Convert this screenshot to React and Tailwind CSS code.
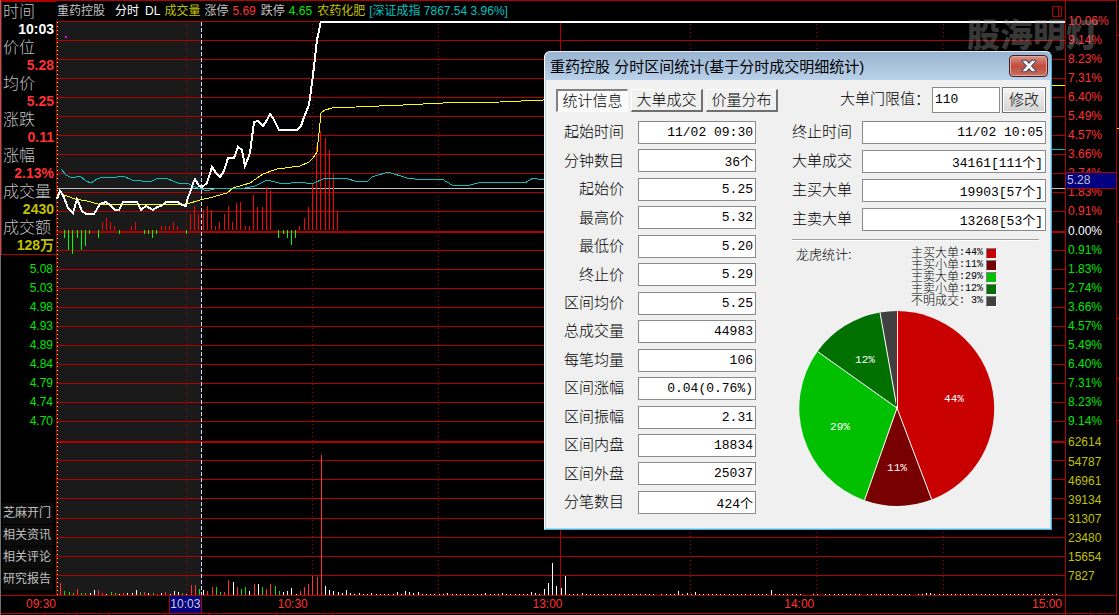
import React from "react";

const quote = [
  ["时间", "10:03", "text-white"],
  ["价位", "5.28", "text-[#ff3232]"],
  ["均价", "5.25", "text-[#ff3232]"],
  ["涨跌", "0.11", "text-[#ff3232]"],
  ["涨幅", "2.13%", "text-[#ff3232]"],
  ["成交量", "2430", "text-[#c0c000]"],
  ["成交额", "128万", "text-[#c0c000]"],
];

const lowPrices = ["5.08", "5.03", "4.98", "4.93", "4.89", "4.84", "4.79", "4.74", "4.70"];
const links = ["芝麻开门", "相关资讯", "相关评论", "研究报告"];

const upper = ["10.06%", "9.14%", "8.23%", "7.31%", "6.40%", "5.49%", "4.57%", "3.66%", "2.74%", "1.83%", "0.91%"];
const lower = ["0.91%", "1.83%", "2.74%", "3.66%", "4.57%", "5.49%", "6.40%", "7.31%", "8.23%", "9.14%"];
const volumes = ["54787", "46961", "39134", "31307", "23480", "15654", "7827"];

const gridY = [
  21, 40, 59, 78, 97, 116, 135, 154, 173, 192, 211, 250, 269, 288, 307, 326, 345, 364, 383, 402, 421,
  460, 479, 498, 518, 537, 556, 575, 595,
];
const gridX = [186, 312, 438, 690, 816, 943];

const redBars = [
  [102, 222], [106, 218], [110, 222], [114, 226], [131, 226], [135, 222], [161, 226], [165, 226], [169, 226],
  [173, 222], [177, 226], [190, 214], [194, 206], [198, 214], [203, 210], [207, 206], [211, 210], [215, 226],
  [219, 222], [224, 214], [228, 206], [232, 222], [236, 203], [240, 202], [245, 226], [249, 226], [253, 195],
  [257, 207], [262, 207], [266, 187], [270, 191], [299, 226], [304, 218], [308, 207], [312, 183], [316, 146],
  [320, 131], [325, 138], [329, 150], [333, 174], [337, 211],
];
const greenBars = [
  [64, 238], [68, 250], [72, 254], [77, 238], [81, 250], [85, 246], [89, 234], [98, 238], [119, 234], [144, 234],
  [148, 234], [152, 238], [156, 234], [186, 234], [278, 238], [283, 234], [287, 238], [291, 245], [295, 238],
];

const volR = [
  [60, 583], [77, 589], [98, 590], [102, 593], [123, 593], [144, 592], [157, 594], [165, 592], [191, 585],
  [195, 585], [207, 591], [212, 587], [224, 592], [228, 580], [237, 587], [254, 584], [266, 589], [270, 584],
  [300, 591], [304, 587], [308, 584], [312, 576], [317, 577], [321, 455],
];
const volG = [
  [64, 591], [69, 592], [73, 593], [81, 593], [85, 593], [111, 592], [115, 593], [140, 592], [153, 593],
  [182, 593], [199, 589], [216, 587], [220, 592], [241, 589], [245, 587], [262, 587], [275, 586], [279, 591],
];
const volW = [
  [90, 593], [94, 590], [106, 594], [119, 594], [127, 593], [132, 593], [136, 590], [148, 593], [161, 593],
  [170, 594], [174, 591], [178, 592], [186, 594], [203, 590], [233, 582], [249, 591], [258, 584], [283, 592],
  [287, 591], [291, 588], [296, 594], [325, 586], [329, 590], [333, 591], [338, 592], [342, 593], [346, 590],
  [350, 593], [354, 594], [359, 593], [363, 594], [367, 594], [371, 593], [376, 594], [380, 594], [384, 594],
  [388, 594], [393, 594], [397, 592], [401, 594], [405, 591], [409, 592], [413, 593], [418, 592], [422, 594],
  [426, 594], [430, 594], [434, 594], [439, 594], [443, 594], [447, 593], [452, 594], [456, 594], [460, 594],
  [464, 594], [468, 594], [473, 594], [477, 594], [481, 594], [485, 593], [490, 594], [494, 594], [498, 594],
  [502, 593], [506, 594], [510, 594], [515, 594], [519, 594], [523, 594], [527, 594], [531, 592], [535, 593],
  [539, 594], [544, 589], [548, 583], [552, 563], [556, 586], [561, 588], [565, 576], [582, 593], [678, 591],
  [687, 593], [695, 592], [771, 590], [926, 593], [930, 593],
];
const dots = [];
for (let i = 0; i < 117; i++) {
  const x = Math.round(569 + i * 4.2);
  const gap = (x > 655 && x < 660) || (x > 802 && x < 811) || (x > 818 && x < 823) || (x > 862 && x < 866) || (x > 911 && x < 917);
  if (!gap) dots.push([x, 594]);
}

const stats = [
  ["起始时间", "11/02 09:30"],
  ["分钟数目", "36个"],
  ["起始价", "5.25"],
  ["最高价", "5.32"],
  ["最低价", "5.20"],
  ["终止价", "5.29"],
  ["区间均价", "5.25"],
  ["总成交量", "44983"],
  ["每笔均量", "106"],
  ["区间涨幅", "0.04(0.76%)"],
  ["区间振幅", "2.31"],
  ["区间内盘", "18834"],
  ["区间外盘", "25037"],
  ["分笔数目", "424个"],
];
const orders = [
  ["终止时间", "11/02 10:05"],
  ["大单成交", "34161[111个]"],
  ["主买大单", "19903[57个]"],
  ["主卖大单", "13268[53个]"],
];
const legend = [
  ["主买大单", ":44%", "bg-[#c80000]"],
  ["主买小单", ":11%", "bg-[#780000]"],
  ["主卖大单", ":29%", "bg-[#00c000]"],
  ["主卖小单", ":12%", "bg-[#007000]"],
  ["不明成交", ": 3%", "bg-[#404040]"],
];

function Bars({ data, base, color }) {
  return data.map(([x, y]) => (
    <rect key={x} x={x} y={Math.min(y, base)} width="1" height={Math.abs(base - y)} fill={color} />
  ));
}

function Chart() {
  return (
    <svg
      viewBox="56 21 1010 575"
      preserveAspectRatio="none"
      shapeRendering="crispEdges"
      className="block min-h-0 w-full flex-1"
      role="img"
      aria-label="分时走势"
    >
      <rect x="57" y="21" width="145" height="574" fill="#1a1a1a" />
      {gridY.map((y) => (
        <rect key={y} x="56" y={y} width="1010" height="1" fill="#b00000" />
      ))}
      <rect x="56" y="231" width="1010" height="2" fill="#b00000" />
      <rect x="56" y="441" width="1010" height="2" fill="#b00000" />
      {gridX.map((x) => (
        <path key={x} d={`M${x + 0.5} 24V595`} stroke="#b00000" strokeDasharray="1 3" />
      ))}
      <rect x="560" y="21" width="1" height="574" fill="#b00000" />
      <rect x="56" y="21" width="1" height="575" fill="#b00000" />
      <rect x="1065" y="21" width="1" height="575" fill="#b00000" />
      <path d="M57.500 22V595" stroke="#ffff50" strokeDasharray="1 3" />
      <rect x="65" y="36" width="2" height="2" fill="#ff00ff" />
      <rect x="57" y="188" width="1008" height="1" fill="#c0c0c0" />
      <Bars data={redBars} base={230} color="#ff0000" />
      <Bars data={greenBars} base={230} color="#00ff00" />
      <Bars data={volR} base={595} color="#ff3232" />
      <Bars data={volG} base={595} color="#00e600" />
      <Bars data={dots} base={595} color="#ffffff" />
      <Bars data={volW} base={595} color="#ffffff" />
      <polyline
        fill="none"
        stroke="#00c0c0"
        points="61,169 66,175 72,178 80,176 86,181 91,183 97,179 103,177 117,177 123,176 132,180 142,181 150,182 158,178 168,179 180,184 187,183 195,187 207,191 217,188 240,189 255,186 267,180 283,184 300,182 312,184 323,179 333,178 348,179 355,181 368,181 372,177 388,172 407,178 423,180 442,179 452,185 470,185 482,182 507,182 525,183 533,178 543,180 600,170 1000,149 1065,149"
      />
      <polyline
        fill="none"
        stroke="#ffff00"
        points="61,194 67,196 75,199 87,201 98,204 187,204 200,200 213,197 227,193 233,188 250,183 263,174 277,169 300,166 309,162 313,158 317,152 319,133 321,113 325,110 332,108 403,105 443,103 500,102 543,100 1000,85 1065,85"
      />
      <polyline
        fill="none"
        stroke="#ffffff"
        strokeWidth="2"
        points="57,199 60,191 63,195 68,208 73,213 77,199 82,211 86,214 94,214 100,204 106,202 110,205 115,210 119,210 123,202 137,202 141,210 146,206 153,210 157,207 161,206 166,202 178,202 182,205 186,206 187,200 191,190 193,183 195,179 199,186 202,187 207,183 212,167 216,173 220,177 224,171 228,158 234,158 238,147 242,150 245,166 250,153 254,122 258,121 263,126 267,120 270,114 273,118 279,130 297,130 301,126 304,117 309,105 313,75 317,40 321,21"
      />
      <rect x="320" y="20" width="745" height="3" fill="#ffffff" />
      <path d="M201.500 22V595" stroke="#d8d8ff" strokeDasharray="4 2" />
    </svg>
  );
}

function Field({ label, value, labelClass, inputClass }) {
  return (
    <label className="flex h-[23px] items-center">
      <span className={"text-[15px] font-light " + labelClass}>{label}</span>
      <input
        readOnly
        value={value}
        className={
          "h-[23px] border border-[#8a8a8a] bg-white pr-[2px] text-right font-['Liberation_Mono','Noto_Sans_CJK_SC',monospace] text-[13px] text-black outline-none " +
          inputClass
        }
      />
    </label>
  );
}

function Pie() {
  return (
    <svg viewBox="798 310 198 198" className="h-[198px] w-[198px]" role="img" aria-label="龙虎统计">
      <path d="M897 408V311A97.500 97.500 0 0 1 931.700 499.500Z" fill="#c80000" />
      <path d="M897 408L931.700 499.500A97.500 97.500 0 0 1 864.500 500.200Z" fill="#780000" />
      <path d="M897 408L864.500 500.200A97.500 97.500 0 0 1 817.500 351.500Z" fill="#00c000" />
      <path d="M897 408L817.500 351.500A97.500 97.500 0 0 1 880 312.500Z" fill="#007000" />
      <path d="M897 408L880 312.500A97.500 97.500 0 0 1 897 311Z" fill="#404040" />
      <path
        d="M897.500 311V408M897 408L931.700 499.500M897 408L864.500 500.200M897 408L817.500 351.500M897 408L880 312.500"
        stroke="#ffffff"
        fill="none"
      />
      <path d="M896.500 311V406" stroke="#c80000" fill="none" />
      <g
        fill="#ffffff"
        textAnchor="middle"
        className="font-['Liberation_Mono',monospace] text-[11px]"
      >
        <text x="954" y="402">44%</text>
        <text x="897" y="471">11%</text>
        <text x="840" y="430">29%</text>
        <text x="865" y="363">12%</text>
      </g>
    </svg>
  );
}

const tabOn =
  "h-[23px] w-[72px] border-t-2 border-l-2 border-r border-b border-t-[#808080] border-l-[#808080] border-r-white border-b-white bg-[#fafafa] text-[15px] font-light leading-5";
const tabOff =
  "h-[23px] w-[72px] border-t border-l border-r-2 border-b-2 border-t-white border-l-white border-r-[#707070] border-b-[#707070] bg-[#f0f0f0] text-[15px] font-light leading-5";

function Dialog() {
  return (
    <section
      role="dialog"
      aria-label="分时区间统计"
      className="absolute top-[51px] right-[67px] w-[508px] rounded-t-md border border-t-[#e8eef5] border-r-[#38b8e0] border-b-[#38b8e0] border-l-white bg-[#b9d1ea] text-black"
    >
      <header className="flex h-7 items-start justify-between rounded-t-md bg-linear-to-b from-[#99b4d1] to-[#b9d1ea] pr-[3px] pl-[5px]">
        <h1 className="text-[15px] leading-[29px] whitespace-nowrap">重药控股 分时区间统计(基于分时成交明细统计)</h1>
        <button
          aria-label="关闭"
          className="mt-[3px] flex h-[22px] w-[39px] items-center justify-center rounded-sm border border-[#431c22] bg-linear-to-b from-[#d8938b] via-[#c04a3c] to-[#c9705e] shadow-[inset_0_0_0_1px_#e2a9a0]"
        >
          <svg viewBox="0 0 14 12" className="h-3.5 w-4" aria-hidden="true">
            <path
              d="M1 1H4.800L7 3.500L9.200 1H13V2L9.300 6L13 10V11H9.200L7 8.500L4.800 11H1V10L4.700 6L1 2Z"
              fill="#f6f6f6"
              stroke="#4a4a5c"
              strokeWidth="0.900"
            />
          </svg>
        </button>
      </header>
      <div className="mr-px mb-px ml-px flex justify-between bg-[#f0f0f0] pt-[6px] pr-[4px] pb-[14px] pl-[10px]">
        <div className="flex w-[222px] flex-col">
          <div className="mt-[3px] flex h-[23px] gap-[3px]" role="tablist">
            <button role="tab" aria-selected="true" className={tabOn}>统计信息</button>
            <button role="tab" aria-selected="false" className={tabOff}>大单成交</button>
            <button role="tab" aria-selected="false" className={tabOff}>价量分布</button>
          </div>
          <div className="mt-[9px] flex h-[393px] flex-col justify-between">
            {stats.map(([l, v]) => (
              <Field key={l} label={l} value={v} labelClass="w-[68px] text-right" inputClass="ml-[14px] w-[118px]" />
            ))}
          </div>
        </div>
        <div className="flex w-[254px] flex-col">
          <div className="flex h-[27px] items-center justify-end gap-[2px]">
            <label htmlFor="limit" className="text-[15px] font-light whitespace-nowrap">大单门限值：</label>
            <input
              id="limit"
              defaultValue="110"
              className="h-[26px] w-[68px] border border-[#8a8a8a] bg-white pl-[2px] font-['Liberation_Mono',monospace] text-[13px] outline-none"
            />
            <button className="h-[26px] w-11 border border-[#707070] bg-linear-to-b from-[#f4f4f4] to-[#d4d4d4] text-[15px] leading-5 font-light shadow-[inset_0_0_0_1px_#fcfcfc]">
              修改
            </button>
          </div>
          <div className="mt-[8px] flex h-[110px] flex-col justify-between">
            {orders.map(([l, v]) => (
              <Field key={l} label={l} value={v} labelClass="w-[70px]" inputClass="w-[184px]" />
            ))}
          </div>
          <hr className="mt-2 mr-[7px] h-[2px] border-t border-b border-t-[#a0a0a0] border-b-white" />
          <div className="mt-[6px] flex items-start justify-between pr-[49px] pl-[4px]">
            <h2 className="text-[13px] leading-[15px] font-light">龙虎统计:</h2>
            <ul className="text-[12px] leading-3">
              {legend.map(([l, v, c]) => (
                <li key={l} className="flex h-3 items-center">
                  <span className="font-light">{l}</span>
                  <span className="font-['Liberation_Mono',monospace] text-[10px] whitespace-pre">{v}</span>
                  <span className={"ml-[3px] h-[11px] w-[11px] border border-t-[#808080] border-r-white border-b-white border-l-[#808080] " + c} />
                </li>
              ))}
            </ul>
          </div>
          <div className="mt-[3px] pl-[6px]">
            <Pie />
          </div>
        </div>
      </div>
    </section>
  );
}

export default function App() {
  return (
    <div className="relative flex h-screen flex-col overflow-hidden border-l border-l-[#707070] bg-black font-['Liberation_Sans','Noto_Sans_CJK_SC',sans-serif] text-[12px] text-[#c0c0c0]">
      <div className="flex min-h-0 flex-1">
        <aside className="flex w-[55px] shrink-0 flex-col border-t border-t-[#b00000]">
          <dl className="border-t border-b border-l border-[#b00000] pr-[2px]">
            {quote.map(([l, v, c]) => (
              <div key={l}>
                <dt className="h-[18px] pl-[1px] text-[16px] leading-5 font-light">{l}</dt>
                <dd className={"h-[18px] text-right text-[14px] leading-[18px] font-bold " + c}>{v}</dd>
              </div>
            ))}
          </dl>
          <ul className="mt-[5px] pr-[3px] text-right leading-[19px] text-[#00e600]">
            {lowPrices.map((p) => (
              <li key={p}>{p}</li>
            ))}
          </ul>
          <nav className="mt-auto mb-[5px] flex flex-col gap-px pr-[3px] pl-[2px]">
            {links.map((l) => (
              <button key={l} className="h-[21px] bg-[#0c0c0c] text-left text-[12px] leading-[21px]">{l}</button>
            ))}
          </nav>
          <div className="h-[18px] border-t border-t-[#b00000] text-right leading-[17px] text-[#ff3232]">09:30</div>
        </aside>

        <main className="flex min-w-0 flex-1 flex-col border-t border-t-[#b00000]">
          <header className="flex h-5 items-center border-r border-r-[#b00000] pr-[2px] pl-px whitespace-nowrap">
            <div className="flex flex-1 gap-1 leading-5">
              <span className="mr-[6px]">重药控股</span>
              <span className="mr-[2px] text-white">分时</span>
              <span className="text-white">DL</span>
              <span className="text-[#c0c000]">成交量</span>
              <span>涨停</span>
              <span className="text-[#ff3232]">5.69</span>
              <span className="ml-px">跌停</span>
              <span className="text-[#00e600]">4.65</span>
              <span className="ml-px text-[#c0c000]">农药化肥</span>
              <span className="text-[#00c0c0]">[深证成指 7867.54 3.96%]</span>
            </div>
            <svg viewBox="0 0 11 11" className="h-[11px] w-[11px]" fill="none" stroke="#b00000" aria-hidden="true">
              <path d="M0.500 0.500H9.500V10.500H0.500ZM6.500 0.500V10.500" />
            </svg>
          </header>
          <Chart />
          <div className="grid h-[17px] grid-cols-[113fr_33fr_106fr_255fr_252fr_248fr_3fr] border-r border-r-[#b00000] text-right leading-[17px] text-[#ff3232]">
            <span />
            <span className="border-r border-l border-[#b00000] bg-[#000080] text-center text-[#d0d0d0]">10:03</span>
            <span>10:30</span>
            <span>13:00</span>
            <span>14:00</span>
            <span>15:00</span>
            <span />
          </div>
        </main>

        <aside className="relative flex w-[51px] shrink-0 flex-col border-t border-r border-[#b00000] pl-[2px]">
          <ul className="mt-[11px] leading-[19px]">
            {upper.map((t) => (
              <li key={t} className="text-[#ff3232]">{t}</li>
            ))}
            <li className="leading-5 text-white">0.00%</li>
            {lower.map((t) => (
              <li key={t} className="text-[#00e600]">{t}</li>
            ))}
            <li className="leading-[22px] text-[#c0c000]">62614</li>
            {volumes.map((t) => (
              <li key={t} className="text-[#c0c000]">{t}</li>
            ))}
          </ul>
          <div className="absolute top-[171px] right-0 left-0 h-[17px] border-t border-b border-[#b00000] bg-[#000080] pl-[1px] leading-[15px]">
            5.28
          </div>
          <div className="mt-auto -ml-[2px] h-[18px] border-t border-t-[#b00000]" />
        </aside>
        <svg viewBox="0 0 2 613" preserveAspectRatio="none" shapeRendering="crispEdges" className="h-full w-[2px] shrink-0" aria-hidden="true">
          <rect y="35" width="2" height="1" fill="#b00000" />
          <rect y="128" width="2" height="1" fill="#ffd000" />
          <rect y="221" width="2" height="1" fill="#b00000" />
          <rect y="318" width="2" height="1" fill="#b00000" />
          <rect y="378" width="2" height="1" fill="#b00000" />
          <rect y="420" width="2" height="1" fill="#b00000" />
        </svg>
      </div>
      <svg viewBox="0 0 1118 2" preserveAspectRatio="none" shapeRendering="crispEdges" className="h-[2px] w-full shrink-0" aria-hidden="true">
        <rect width="1116" height="1" fill="#b00000" />
        {[43, 75, 107, 163, 207, 275, 331, 1064, 1089].map((x) => (
          <rect key={x} x={x} width="1" height="2" fill="#b00000" />
        ))}
      </svg>

      <Dialog />
      <div className="pointer-events-none absolute top-[12px] right-[20px] text-[33px] leading-[48px] font-black text-[#a0a0a0]/35">
        股海明灯
      </div>
    </div>
  );
}
